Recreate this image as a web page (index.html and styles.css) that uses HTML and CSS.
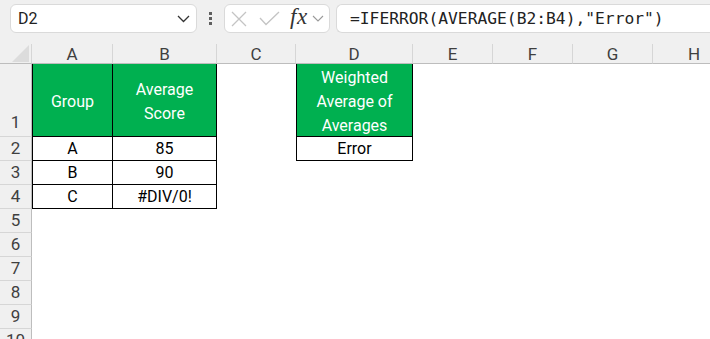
FILE: index.html
```html
<!DOCTYPE html>
<html lang="en">
<head>
  <meta charset="UTF-8" />
  <title>Weighted Average - IFERROR</title>
  <link rel="stylesheet" href="styles.css">
</head>
<body>
  <!-- Formula bar -->
  <div class="topbar">
    <div class="namebox">
      <span>D2</span>
      <svg class="chev" width="13" height="8" viewBox="0 0 13 8"><polyline points="1,1 6.5,6.5 12,1" /></svg>
    </div>
    <div class="grip"><i></i><i></i><i></i></div>
    <div class="fxbox">
      <svg class="ico" width="16" height="16" viewBox="0 0 16 16"><path d="M1 1 L15 15 M15 1 L1 15" /></svg>
      <svg class="ico" width="21" height="15" viewBox="0 0 21 15"><polyline points="1,7 7,13.5 20,1" /></svg>
      <span class="fx">fx</span>
      <svg class="chev small" width="12" height="7" viewBox="0 0 12 7"><polyline points="1,1 6,6 11,1" /></svg>
    </div>
    <div class="formula">=IFERROR(AVERAGE(B2:B4),"Error")</div>
  </div>

  <!-- Sheet -->
  <div class="sheet">
    <div class="corner"></div>
    <div class="colhead">A</div>
    <div class="colhead">B</div>
    <div class="colhead">C</div>
    <div class="colhead">D</div>
    <div class="colhead">E</div>
    <div class="colhead">F</div>
    <div class="colhead">G</div>
    <div class="colhead last">H</div>

    <div class="rowhead tall">1</div>
    <div class="cell head first">Group</div>
    <div class="cell head">Average<br>Score</div>
    <div></div>
    <div class="cell head first">Weighted<br>Average of<br>Averages</div>

    <div class="rowhead">2</div>
    <div class="cell first">A</div>
    <div class="cell">85</div>
    <div></div>
    <div class="cell first">Error</div>

    <div class="rowhead">3</div>
    <div class="cell first">B</div>
    <div class="cell">90</div>

    <div class="rowhead">4</div>
    <div class="cell first">C</div>
    <div class="cell">#DIV/0!</div>

    <div class="rowhead">5</div>
    <div class="rowhead">6</div>
    <div class="rowhead">7</div>
    <div class="rowhead">8</div>
    <div class="rowhead">9</div>
    <div class="rowhead">10</div>
  </div>
</body>
</html>
```

FILE: styles.css
```css
:root {
  --chrome: #f0f0f0;
  --chrome-line: #d6d6d6;
  --chrome-edge: #bdbdbd;
  --head-text: #3f3f3f;
  --green: #00b050;
}

* { margin: 0; padding: 0; box-sizing: border-box; }

body {
  background: #fff;
  font-family: Roboto, "Liberation Sans", sans-serif;
  overflow: hidden;
}

/* Formula bar */
.topbar {
  height: 44px;
  background: var(--chrome);
  display: flex;
  align-items: flex-start;
  padding: 4px 0 0 10px;
}

.namebox {
  width: 187px; height: 29px;
  background: #fff;
  border: 1px solid #dadada;
  border-radius: 6px;
  display: flex; align-items: center; justify-content: space-between;
  padding: 0 6px 0 7px;
  font-size: 16px;
  color: #222;
}

.chev { fill: none; stroke: #333; stroke-width: 1.3; }
.chev.small { stroke: #9a9a9a; stroke-width: 1.1; }

.grip {
  width: 27px; height: 29px;
  display: flex; flex-direction: column; align-items: center; justify-content: center;
  gap: 2px;
}
.grip i {
  display: block;
  width: 3px; height: 3px;
  background: #5f5f5f;
}

.fxbox {
  width: 106px; height: 29px;
  background: #fff;
  border: 1px solid #dadada;
  border-radius: 6px;
  display: flex; align-items: center;
  padding-left: 6px;
}
.ico { fill: none; stroke: #c4c4c4; stroke-width: 1.3; }
.fxbox .ico:first-child { margin-right: 12px; }
.fx {
  font-family: "Liberation Serif", serif;
  font-style: italic;
  font-size: 23px;
  color: #333;
  margin: -3px 4px 0 10px;
  letter-spacing: 0.5px;
}

.formula {
  flex: 1;
  height: 29px;
  margin-left: 6px;
  background: #fff;
  border: 1px solid #dadada;
  border-right: none;
  border-radius: 6px 0 0 6px;
  padding-left: 13px;
  display: flex; align-items: center;
  font-family: "DejaVu Sans Mono", monospace;
  font-size: 16.3px;
  color: #222;
  white-space: nowrap;
}

/* Sheet grid */
.sheet {
  display: grid;
  grid-template-columns: 32px 81px 104px 79px 117px 80px 80px 80px 1fr;
  grid-template-rows: 20px 73px repeat(9, 24px);
}

.corner {
  background: var(--chrome);
  border-right: 1px solid var(--chrome-line);
  border-bottom: 1px solid var(--chrome-edge);
  display: flex; align-items: flex-end; justify-content: flex-end;
  padding: 0 2px 1px 0;
}
.corner::after {
  content: "";
  width: 17px; height: 17px;
  background: #dcdcdc;
  clip-path: polygon(100% 0, 100% 100%, 0 100%);
}

.colhead {
  background: var(--chrome);
  border-right: 1px solid var(--chrome-line);
  border-bottom: 1px solid var(--chrome-edge);
  display: flex; align-items: center; justify-content: center;
  font-size: 17px;
  color: var(--head-text);
}
.colhead.last { border-right: none; justify-content: flex-start; padding-left: 35px; }

.rowhead {
  grid-column: 1;
  background: var(--chrome);
  border-right: 1px solid var(--chrome-edge);
  border-bottom: 1px solid var(--chrome-line);
  display: flex; align-items: flex-end; justify-content: center;
  padding-bottom: 2px;
  font-size: 17px;
  line-height: 20px;
  color: var(--head-text);
}
.rowhead.tall { padding-bottom: 4px; }

.cell {
  border-right: 1px solid #000;
  border-bottom: 1px solid #000;
  display: flex; align-items: center; justify-content: center;
  text-align: center;
  font-size: 16px;
  line-height: 24px;
  padding-top: 1px;
  color: #000;
}
.cell.first { border-left: 1px solid #000; }
.cell.head {
  background: var(--green);
  color: #fff;
  padding-top: 3px;
}
```
